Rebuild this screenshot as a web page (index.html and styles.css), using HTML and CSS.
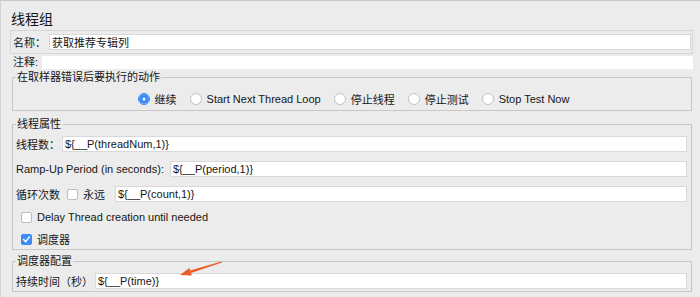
FILE: index.html
```html
<!DOCTYPE html>
<html lang="zh-CN">
<head>
    <meta charset="UTF-8">
    <meta name="viewport" content="width=device-width, initial-scale=1.0">
    <title>线程组</title>
    <link rel="stylesheet" href="styles.css">
</head>
<body>
    <div class="panel">
        <h1 class="title">线程组</h1>
        <div class="name-row">
            <label class="lbl">名称：</label>
            <input class="field" type="text" value="获取推荐专辑列">
        </div>
        <div class="comment-row">
            <label class="lbl">注释:</label>
            <input class="field plain" type="text" value="">
        </div>

        <fieldset class="group on-error">
            <legend>在取样器错误后要执行的动作</legend>
            <div class="radios">
                <label class="opt"><span class="radio on"></span>继续</label>
                <label class="opt"><span class="radio"></span>Start Next Thread Loop</label>
                <label class="opt"><span class="radio"></span>停止线程</label>
                <label class="opt"><span class="radio"></span>停止测试</label>
                <label class="opt"><span class="radio"></span>Stop Test Now</label>
            </div>
        </fieldset>

        <fieldset class="group props">
            <legend>线程属性</legend>
            <div class="row">
                <label class="lbl">线程数：</label>
                <input class="field" type="text" value="${__P(threadNum,1)}">
            </div>
            <div class="row">
                <label class="lbl wide">Ramp-Up Period (in seconds):</label>
                <input class="field" type="text" value="${__P(period,1)}">
            </div>
            <div class="row">
                <label class="lbl">循环次数</label>
                <span class="check loop-check"></span>
                <label class="lbl forever">永远</label>
                <input class="field" type="text" value="${__P(count,1)}">
            </div>
            <div class="check-row first">
                <span class="check"></span>Delay Thread creation until needed
            </div>
            <div class="check-row">
                <span class="check on">
                    <svg width="11" height="11" viewBox="0 0 11 11"><path d="M2.6 5.6 L4.6 7.7 L8.5 2.9" fill="none" stroke="#fff" stroke-width="1.5" stroke-linecap="round" stroke-linejoin="round"/></svg>
                </span>调度器
            </div>
        </fieldset>

        <fieldset class="group scheduler">
            <legend>调度器配置</legend>
            <div class="row">
                <label class="lbl">持续时间（秒）</label>
                <input class="field" type="text" value="${__P(time)}">
            </div>
        </fieldset>

        <!-- 标注箭头 -->
        <svg class="arrow" width="50" height="22" viewBox="0 0 50 22">
            <polygon points="46.9,4.6 46.5,3.4 15,12.4 16,15" fill="#ee5a2c"/>
            <polygon points="5,17 14.3,10 16.8,17.6" fill="#ee5a2c"/>
        </svg>
    </div>
</body>
</html>
```

FILE: styles.css
```css
body {
    margin: 0;
    padding: 0;
    background-color: #ececec;
    color: #161616;
    font-family: "Liberation Sans", "Noto Sans CJK SC", sans-serif;
    font-size: 11px;
}
.panel {
    position: relative;
    box-sizing: border-box;
    width: 700px;
    height: 297px;
    overflow: hidden;
    border-top: 1px solid #c6c6c6;
    border-left: 1px solid #d2d2d2;
    padding: 0 7px 0 9px;
}
.title {
    margin: 0;
    padding: 8px 0 0 1px;
    height: 20px;
    line-height: 20px;
    font-size: 14px;
    font-weight: normal;
}
.lbl {
    white-space: nowrap;
    flex: none;
}
.field {
    flex: 1;
    min-width: 0;
    box-sizing: border-box;
    height: 16px;
    margin: 0;
    padding: 0 2px;
    border: 1px solid #d9d9d9;
    background-color: #fff;
    color: #161616;
    font-family: inherit;
    font-size: 11px;
    outline: none;
}
.name-row {
    display: flex;
    align-items: center;
    height: 22px;
    margin-top: 1px;
    padding: 0 1px 0 2px;
    border: 1px solid #d6d6d6;
}
.name-row .lbl {
    width: 33px;
    margin-right: 3px;
}
.comment-row {
    display: flex;
    align-items: center;
    height: 13px;
    line-height: 13px;
    margin-top: 2px;
}
.comment-row .lbl {
    padding-left: 3px;
    margin-right: 4px;
}
.comment-row .field.plain {
    height: 13px;
    border: none;
}
.group {
    min-width: 0;
    margin: 0 1px 0 2px;
    border: 1px solid #c8c8c8;
    padding: 5px 4px 2px 3px;
}
.group legend {
    padding: 0 1px;
    line-height: 13px;
    font-size: 11px;
}
.on-error {
    margin-top: 2px;
    padding-top: 7px;
    padding-bottom: 3px;
}
.props {
    margin-top: 7px;
}
.scheduler {
    margin-top: 5px;
}
.radios {
    display: flex;
    justify-content: center;
    align-items: center;
    gap: 13px;
    height: 16px;
    padding-left: 4px;
}
.opt {
    display: flex;
    align-items: center;
    white-space: nowrap;
}
.radio {
    box-sizing: border-box;
    width: 12px;
    height: 12px;
    margin-right: 5px;
    border-radius: 50%;
    border: 1px solid #c2c2c2;
    background-color: #fff;
}
.radio.on {
    border-color: #3a88f3;
    box-shadow: inset 0 0 0 3.5px #3b8cf6;
}
.row {
    display: flex;
    align-items: center;
    height: 16px;
    margin-top: 9px;
}
.row:first-of-type {
    margin-top: 0;
}
.row .lbl {
    margin-right: 2px;
}
.row .lbl.wide {
    margin-right: 6px;
}
.check {
    display: inline-flex;
    box-sizing: border-box;
    width: 11px;
    height: 11px;
    border: 1px solid #bdbdbd;
    border-radius: 2px;
    background-color: #fff;
    flex: none;
}
.check.on {
    border-color: #3a88f3;
    background-color: #3b8cf6;
}
.check.on svg {
    margin: -1px;
}
.loop-check {
    margin-left: 5px;
    margin-right: 5px;
}
.row .lbl.forever {
    margin-right: 10px;
}
.check-row {
    display: flex;
    align-items: center;
    height: 16px;
    margin-top: 6px;
    padding-left: 5px;
}
.check-row.first {
    margin-top: 7px;
}
.check-row .check {
    margin-right: 5px;
}
.arrow {
    position: absolute;
    left: 174px;
    top: 257px;
}
```
